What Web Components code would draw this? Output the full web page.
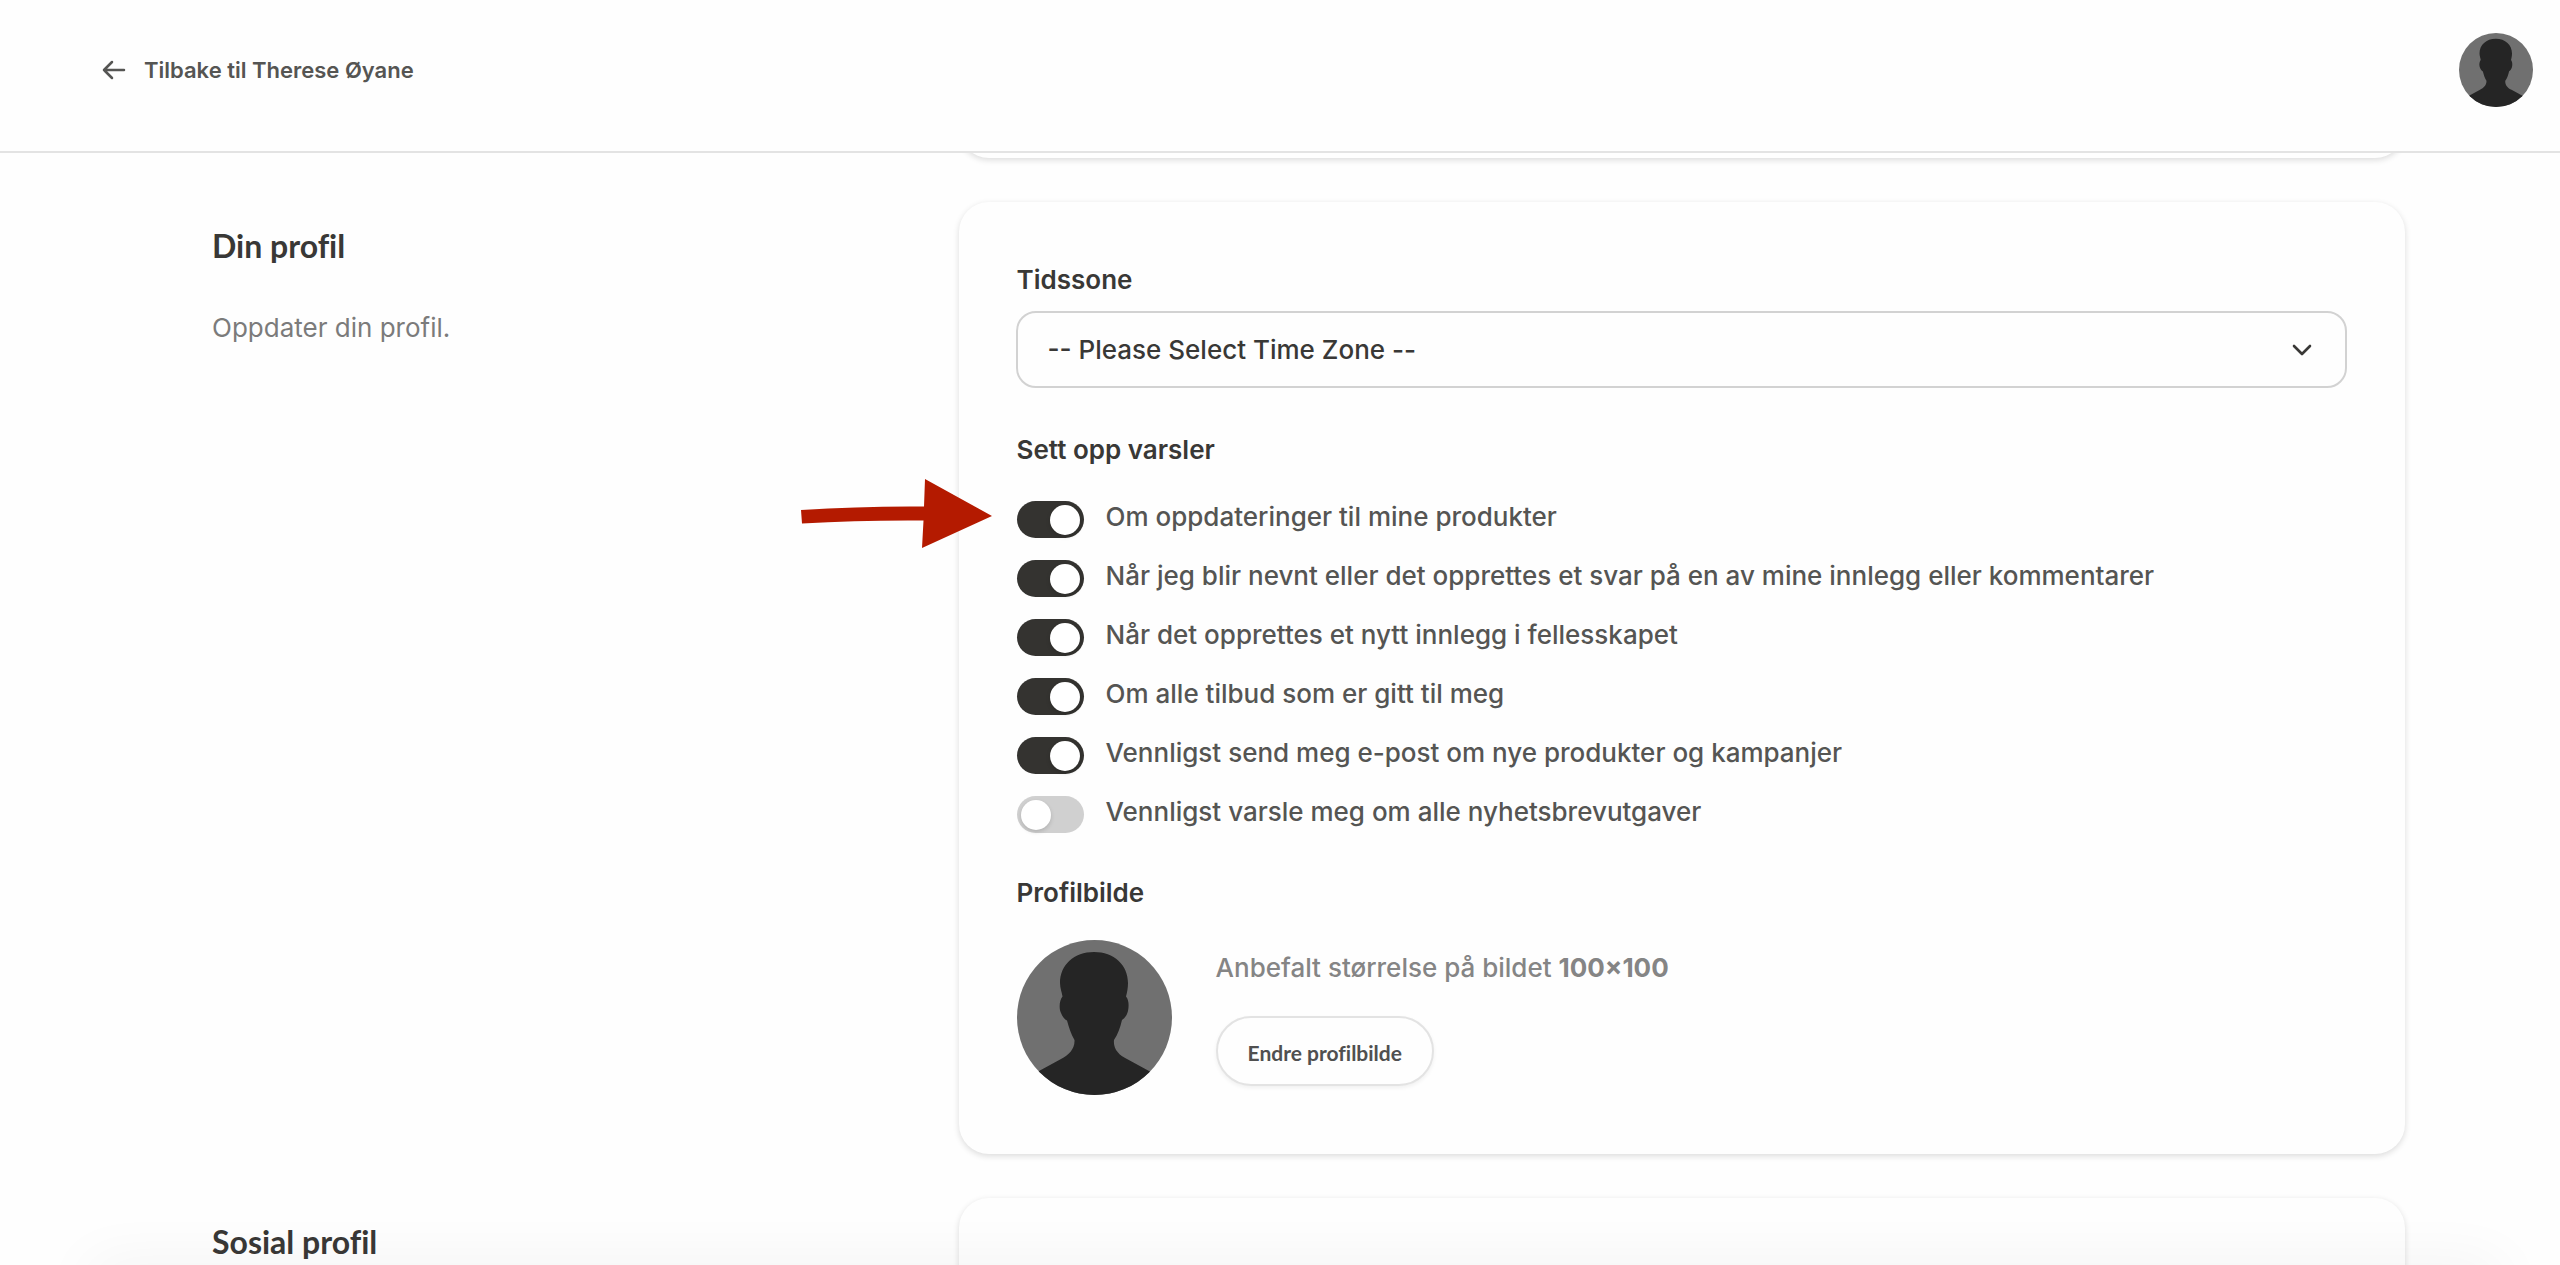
<!DOCTYPE html>
<html lang="no">
<head>
<meta charset="utf-8">
<title>Din profil</title>
<style>
    html, body { margin: 0; height: 100%; }
    body {
        --text-strong: #393836;
        --text-color: #555553;
        --text-muted: #7b7b7b;
        --line-color: #e3e3e3;
        --heading-font: Lato, "Open Sans", sans-serif;
        font-family: Inter, "Liberation Sans", sans-serif;
        font-size: 26px;
        line-height: 32px;
        color: var(--text-color);
        background: #fefefe;
        overflow: hidden;
    }
</style>
</head>
<body>
<profile-page></profile-page>

<script>
const define = (name, html, setup) => {
    const template = document.createElement('template');
    template.innerHTML = html;
    customElements.define(name, class extends HTMLElement {
        constructor() {
            super();
            this.attachShadow({ mode: 'open' });
            this.shadowRoot.appendChild(template.content.cloneNode(true));
        }
        connectedCallback() {
            if (setup) setup(this, this.shadowRoot);
        }
    });
};

define('user-avatar', `
    <style>
        :host { display: block; flex: none; width: 155px; height: 155px; border-radius: 50%; overflow: hidden; }
        :host([small]) { width: 74px; height: 74px; }
        svg { display: block; width: 100%; height: 100%; }
    </style>
    <svg viewBox="0 0 155 155" role="img" aria-label="Profilbilde">
        <rect width="155" height="155" fill="#707070"/>
        <path fill="#252525" d="M77 12C57 12 43 25 43 43C43 48 45 53 45.500 56.500C42 61 42 69 44 73C45 76 47 79 50 80.500C52 88 54 94 57.500 100C58 109 52 115 44 119L22 131L10 138V160H144V138L132 131L110 119C102 115 96 109 97 100C101 94 103 88 105 80C108 78 110 75 111 71C112 66 112 60 109 56.500C110 53 111 48 111 43C111 25 97 12 77 12Z"/>
    </svg>
`);

define('page-header', `
    <style>
        :host { display: flex; justify-content: space-between; align-items: flex-start; box-sizing: border-box; height: 153px; padding: 33px 27px 0 102px; border-bottom: 2px solid var(--line-color); background: #fefefe; position: relative; z-index: 1; }
        a { display: flex; align-items: center; gap: 18px; height: 73px; color: inherit; font-size: 22px; font-weight: 600; text-decoration: none; }
        svg { display: block; width: 24px; height: 20px; }
    </style>
    <a href="#">
        <svg viewBox="0 0 24 20" fill="none" stroke="currentColor" stroke-width="2.500" stroke-linecap="round" stroke-linejoin="round"><path d="M22 10H2M10 2L2 10L10 18"/></svg>
        <slot></slot>
    </a>
    <user-avatar small></user-avatar>
`);

define('profile-section', `
    <style>
        :host { display: grid; grid-template-columns: 5fr 9fr; margin-bottom: 44px; }
        .intro { padding: 24px 0 0 57px; }
        ::slotted(h2) { margin: 0 0 46px; font: 700 32px/40px var(--heading-font); font-variant-ligatures: none; color: var(--text-strong); }
        ::slotted(p) { margin: 0; color: var(--text-muted); }
        .card { box-sizing: border-box; padding: 58px 58px 59px 57px; border-radius: 30px; background: #fefefe; box-shadow: 0 2px 6px rgba(0, 0, 0, .14); }
    </style>
    <div class="intro"><slot name="intro"></slot></div>
    <div class="card"><slot></slot></div>
`);

define('select-field', `
    <style>
        :host { display: block; margin-bottom: 46px; }
        label { display: block; margin: 4px 0 15px 1px; font-weight: 600; color: var(--text-strong); }
        .box { display: grid; align-items: center; }
        select, svg { grid-area: 1 / 1; }
        select { appearance: none; width: 100%; height: 77px; margin: 0; padding: 0 60px 0 30px; border: 2px solid #d2d2d2; border-radius: 20px; background: #fefefe; font: inherit; font-weight: 500; color: var(--text-strong); }
        svg { justify-self: end; width: 20px; height: 12px; margin-right: 35px; pointer-events: none; color: var(--text-strong); }
    </style>
    <label for="choice"><slot></slot></label>
    <div class="box">
        <select id="choice"><option></option></select>
        <svg viewBox="0 0 20 12" fill="none" stroke="currentColor" stroke-width="2.600" stroke-linecap="round" stroke-linejoin="round"><path d="M2 2L10 10L18 2"/></svg>
    </div>
`, (el, root) => {
    root.querySelector('option').textContent = el.getAttribute('placeholder');
});

define('field-group', `
    <style>
        :host { display: block; margin: 0 0 26px 1px; }
        :host(:last-child) { margin-bottom: 0; }
        fieldset { margin: 0; padding: 0; border: 0; min-width: 0; }
        legend { padding: 0; margin-bottom: 31px; font-weight: 600; color: var(--text-strong); }
    </style>
    <fieldset>
        <legend><slot name="title"></slot></legend>
        <slot></slot>
    </fieldset>
`);

define('toggle-switch', `
    <style>
        :host { display: block; position: relative; height: 37px; padding-top: 4px; margin-bottom: 18px; }
        label { display: flex; align-items: flex-start; gap: 22px; font-weight: 500; }
        input { appearance: none; flex: none; box-sizing: border-box; width: 67px; height: 37px; margin: 0; padding: 4px; border-radius: 19px; background: #d0d0d0; }
        input::before { content: ""; display: block; width: 30px; height: 30px; border-radius: 50%; background: #fff; box-shadow: 0 2px 4px rgba(0, 0, 0, .15); }
        input:checked { background: #343330; }
        input:checked::before { margin-left: auto; }
    </style>
    <label><input type="checkbox" role="switch"><span><slot></slot></span></label>
    <slot name="pointer"></slot>
`, (el, root) => {
    root.querySelector('input').checked = el.hasAttribute('checked');
});

// hand-drawn arrow that floats in front of a row
define('pointer-arrow', `
    <style>
        :host { position: absolute; right: 100%; top: -18px; margin-right: 25px; }
        svg { display: block; width: 192px; height: 70px; }
    </style>
    <svg viewBox="0 0 192 70" fill="#b41a00">
        <path d="M1 31Q62 27 124 27.500L125 0L192 37L122 69L123.500 41.500Q61 41 2 44.500Z"/>
    </svg>
`);

define('pill-button', `
    <style>
        :host { display: block; }
        button { height: 70px; padding: 4px 30px 0; border: 2px solid var(--line-color); border-radius: 35px; background: #fefefe; box-shadow: 0 2px 4px rgba(0, 0, 0, .06); font: 700 21px/28px var(--heading-font); font-variant-ligatures: none; color: #505050; }
    </style>
    <button type="button"><slot></slot></button>
`);

define('picture-field', `
    <style>
        :host { display: flex; gap: 44px; }
        .side { padding-top: 12px; }
        p { margin: 0 0 32px; font-weight: 500; color: #858585; }
    </style>
    <user-avatar></user-avatar>
    <div class="side">
        <p><slot></slot></p>
        <pill-button>Endre profilbilde</pill-button>
    </div>
`);

define('profile-page', `
    <style>
        :host { display: block; height: 100%; overflow: hidden; position: relative; }
        main { padding: 0 155px; margin-top: -112px; }
        .shade { position: absolute; left: 90px; right: 60px; top: 100%; height: 40px; box-shadow: 0 0 60px rgba(0, 0, 0, .06); pointer-events: none; }
    </style>
    <page-header>Tilbake til Therese Øyane</page-header>
    <main>
        <profile-section></profile-section>
        <profile-section>
            <h2 slot="intro">Din profil</h2>
            <p slot="intro">Oppdater din profil.</p>
            <select-field placeholder="-- Please Select Time Zone --">Tidssone</select-field>
            <field-group>
                <span slot="title">Sett opp varsler</span>
                <toggle-switch checked>Om oppdateringer til mine produkter<pointer-arrow slot="pointer"></pointer-arrow></toggle-switch>
                <toggle-switch checked>Når jeg blir nevnt eller det opprettes et svar på en av mine innlegg eller kommentarer</toggle-switch>
                <toggle-switch checked>Når det opprettes et nytt innlegg i fellesskapet</toggle-switch>
                <toggle-switch checked>Om alle tilbud som er gitt til meg</toggle-switch>
                <toggle-switch checked>Vennligst send meg e-post om nye produkter og kampanjer</toggle-switch>
                <toggle-switch>Vennligst varsle meg om alle nyhetsbrevutgaver</toggle-switch>
            </field-group>
            <field-group>
                <span slot="title">Profilbilde</span>
                <picture-field>Anbefalt størrelse på bildet <b>100×100</b></picture-field>
            </field-group>
        </profile-section>
        <profile-section>
            <h2 slot="intro">Sosial profil</h2>
        </profile-section>
    </main>
    <div class="shade"></div>
`);
</script>
</body>
</html>
